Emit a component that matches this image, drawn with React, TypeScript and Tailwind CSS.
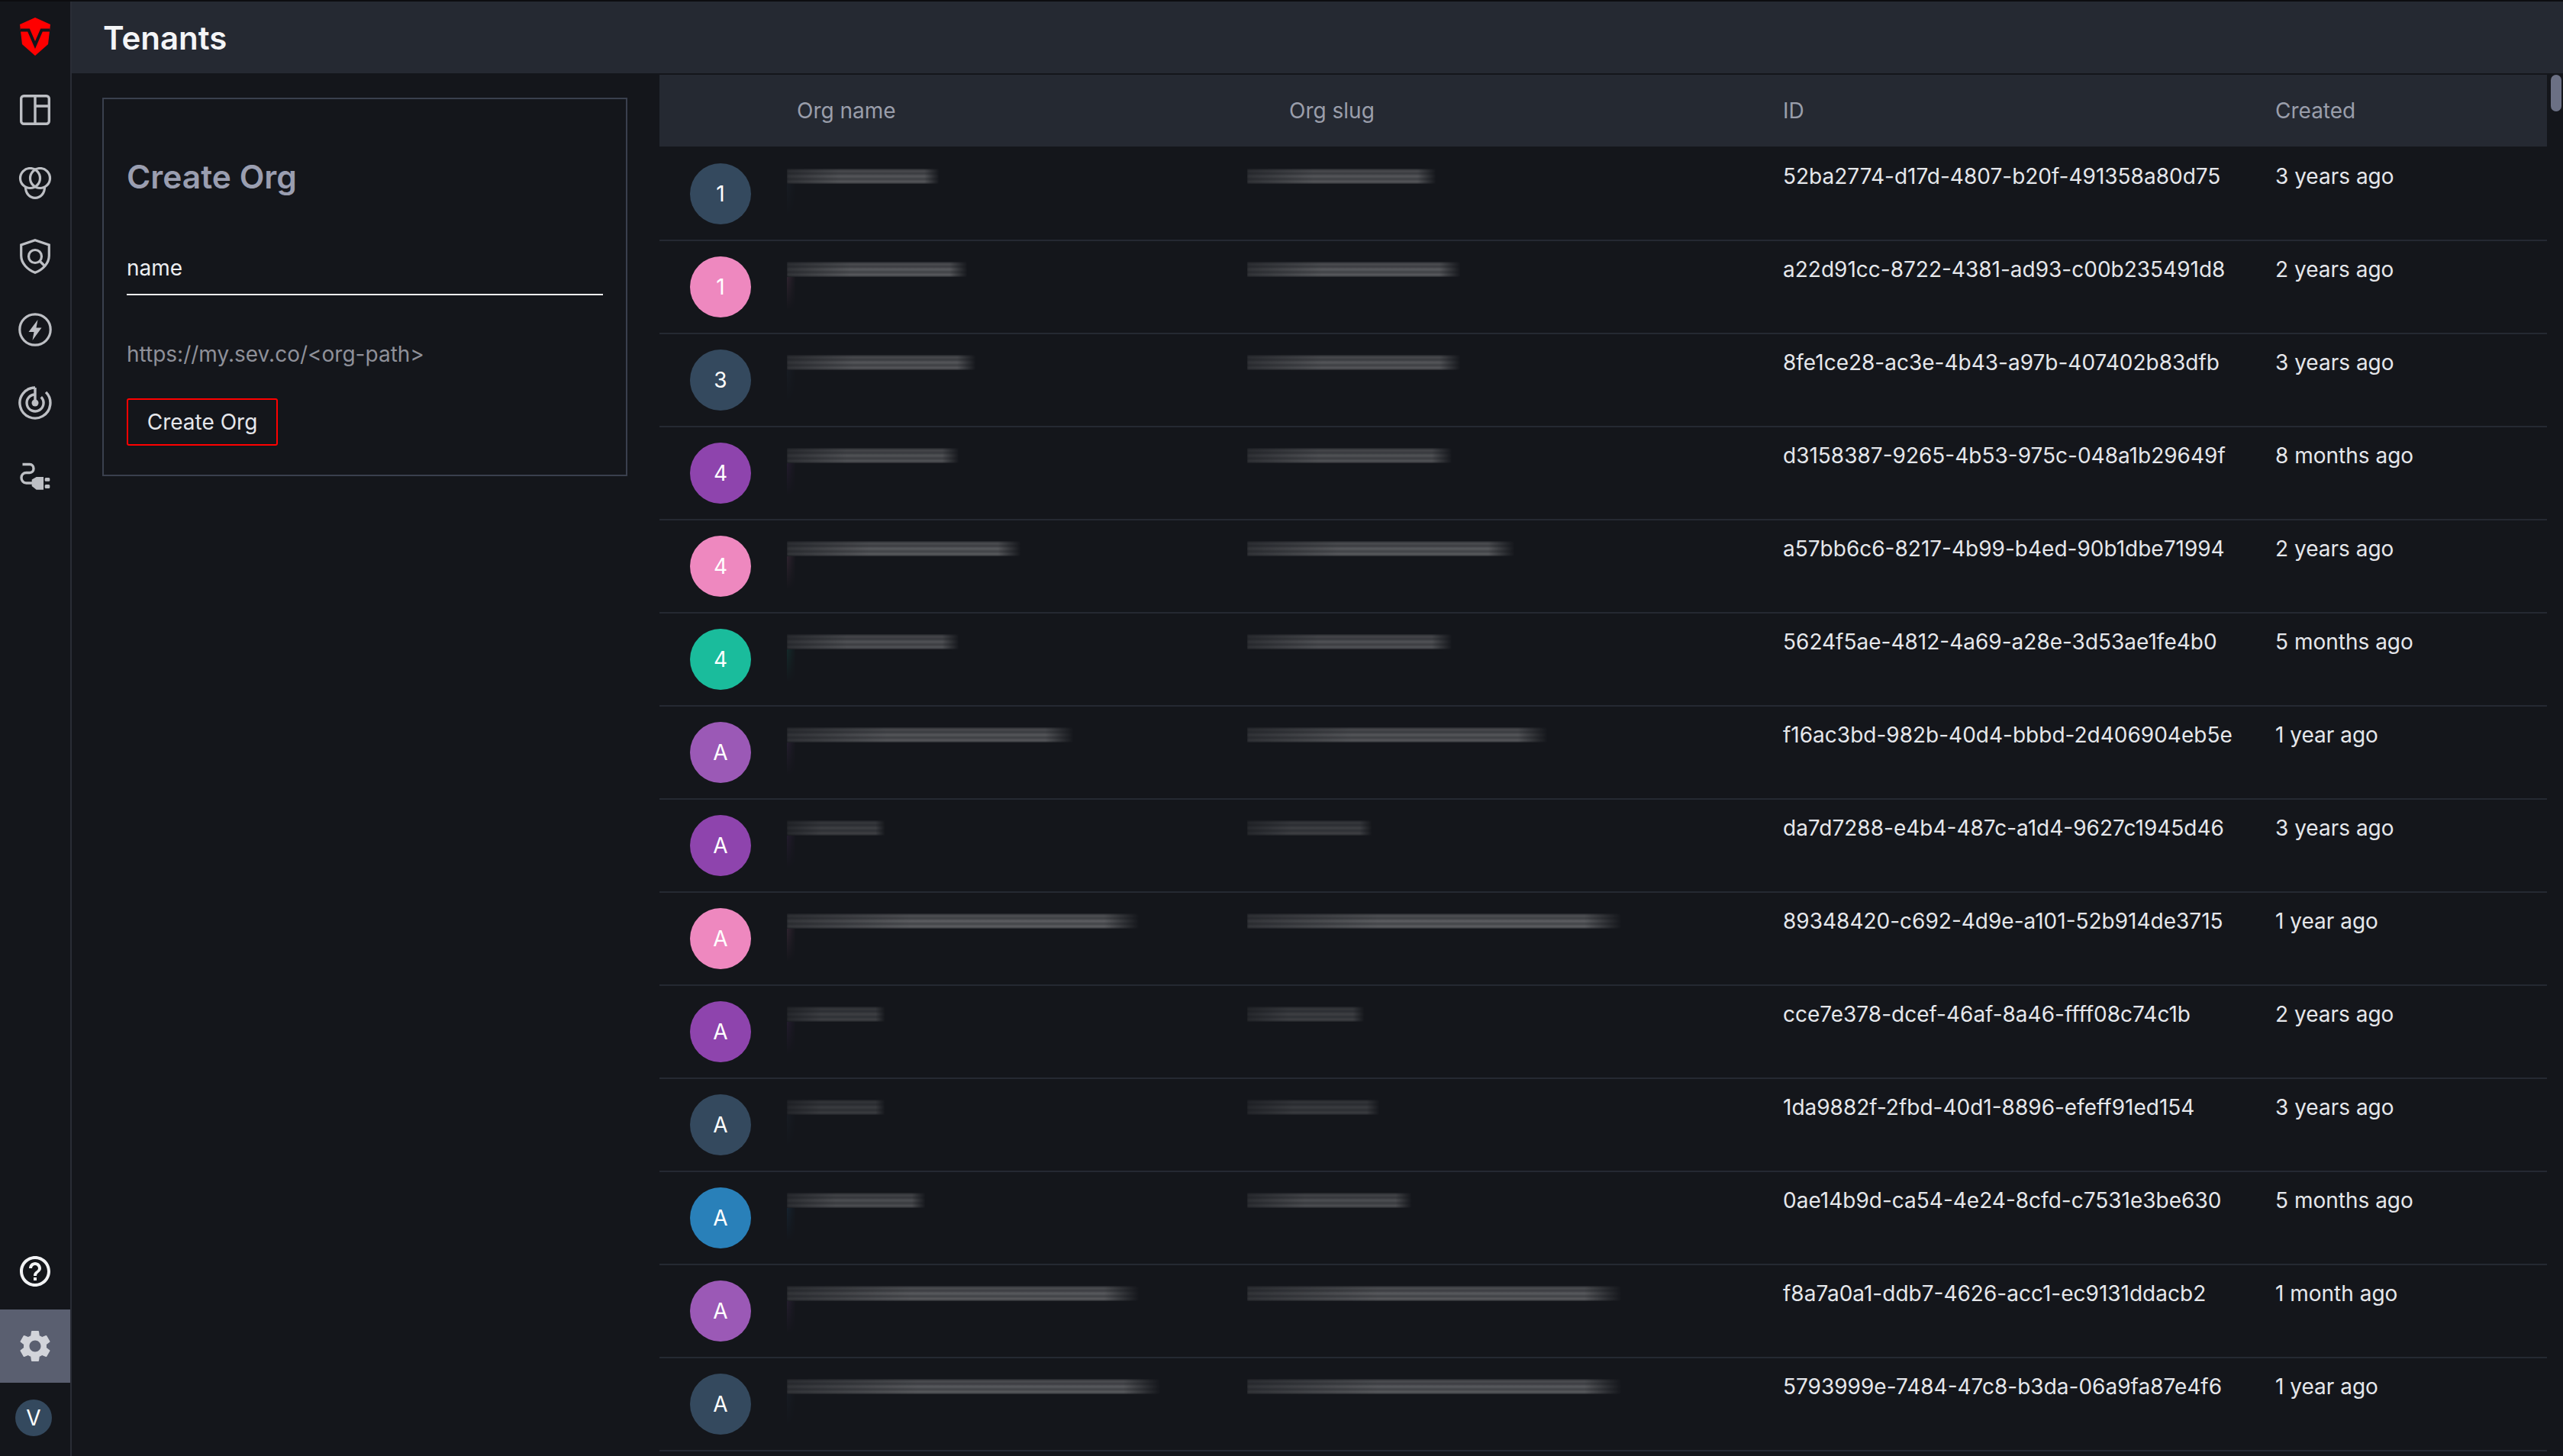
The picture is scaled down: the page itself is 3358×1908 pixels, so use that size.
import { MdHelpOutline, MdSettings } from "react-icons/md";

const SLATE = "#34495e";
const PINK = "#ee88bf";
const PURPLE = "#8e44ad";
const VIOLET = "#9b59b6";
const TEAL = "#1abc9c";
const BLUE = "#2980b9";

// nameW / slugW are the widths of the redacted smears, dim is their strength
const rows = [
  { letter: "1", color: SLATE, nameW: 200, slugW: 248, dim: 0.85, id: "52ba2774-d17d-4807-b20f-491358a80d75", created: "3 years ago" },
  { letter: "1", color: PINK, nameW: 237, slugW: 280, dim: 0.9, id: "a22d91cc-8722-4381-ad93-c00b235491d8", created: "2 years ago" },
  { letter: "3", color: SLATE, nameW: 248, slugW: 280, dim: 0.85, id: "8fe1ce28-ac3e-4b43-a97b-407402b83dfb", created: "3 years ago" },
  { letter: "4", color: PURPLE, nameW: 226, slugW: 269, dim: 0.8, id: "d3158387-9265-4b53-975c-048a1b29649f", created: "8 months ago" },
  { letter: "4", color: PINK, nameW: 307, slugW: 351, dim: 0.9, id: "a57bb6c6-8217-4b99-b4ed-90b1dbe71994", created: "2 years ago" },
  { letter: "4", color: TEAL, nameW: 226, slugW: 269, dim: 0.8, id: "5624f5ae-4812-4a69-a28e-3d53ae1fe4b0", created: "5 months ago" },
  { letter: "A", color: VIOLET, nameW: 376, slugW: 394, dim: 0.85, id: "f16ac3bd-982b-40d4-bbbd-2d406904eb5e", created: "1 year ago" },
  { letter: "A", color: PURPLE, nameW: 129, slugW: 164, dim: 0.55, id: "da7d7288-e4b4-487c-a1d4-9627c1945d46", created: "3 years ago" },
  { letter: "A", color: PINK, nameW: 462, slugW: 491, dim: 0.95, id: "89348420-c692-4d9e-a101-52b914de3715", created: "1 year ago" },
  { letter: "A", color: PURPLE, nameW: 129, slugW: 154, dim: 0.55, id: "cce7e378-dcef-46af-8a46-ffff08c74c1b", created: "2 years ago" },
  { letter: "A", color: SLATE, nameW: 129, slugW: 174, dim: 0.5, id: "1da9882f-2fbd-40d1-8896-efeff91ed154", created: "3 years ago" },
  { letter: "A", color: BLUE, nameW: 182, slugW: 216, dim: 0.75, id: "0ae14b9d-ca54-4e24-8cfd-c7531e3be630", created: "5 months ago" },
  { letter: "A", color: VIOLET, nameW: 462, slugW: 491, dim: 0.9, id: "f8a7a0a1-ddb7-4626-acc1-ec9131ddacb2", created: "1 month ago" },
  { letter: "A", color: SLATE, nameW: 490, slugW: 491, dim: 0.9, id: "5793999e-7484-47c8-b3da-06a9fa87e4f6", created: "1 year ago" },
];

function Logo() {
  return (
    <svg width="40" height="50" viewBox="0 0 40 50">
      <path d="M20 0 40 9 37 35 20 50 3 35 0 9Z" fill="#ff0000" />
      <path d="M1 16.5H11.5L20 36 28.500 16.500H39" fill="none" stroke="#14161b" strokeWidth="4" />
    </svg>
  );
}

function PanelIcon() {
  return (
    <svg width="40" height="40" viewBox="0 0 40 40" fill="none" stroke="#bdbfc4" strokeWidth="3.4">
      <rect x="1.700" y="1.700" width="36.600" height="36.600" rx="3.500" />
      <path d="M20 2V38M20 15H38" />
    </svg>
  );
}

function VennIcon() {
  return (
    <svg width="44" height="42" viewBox="0 0 44 42" fill="none" stroke="#bdbfc4" strokeWidth="3.200">
      <circle cx="15.500" cy="14.500" r="13" />
      <circle cx="28.500" cy="14.500" r="13" />
      <path d="M9.500 26.500C9.500 34.500 15 40.300 22 40.300S34.500 34.500 34.500 26.500" />
    </svg>
  );
}

function ShieldIcon() {
  return (
    <svg width="40" height="46" viewBox="0 0 40 46" fill="none" stroke="#bdbfc4" strokeWidth="3.200">
      <path d="M20 1.700 38.300 8V22C38.300 32 30 40.500 20 44.300 10 40.500 1.700 32 1.700 22V8Z" />
      <circle cx="20" cy="23" r="8.500" />
      <path d="M26 29 33 36" />
    </svg>
  );
}

function BoltIcon() {
  return (
    <svg width="44" height="44" viewBox="0 0 44 44">
      <circle cx="22" cy="22" r="20.200" fill="none" stroke="#bdbfc4" strokeWidth="3.200" />
      <path d="M25.500 9 13.500 25H20.500L18.500 36 30.500 19.500H23.500Z" fill="#bdbfc4" />
    </svg>
  );
}

function RadarIcon() {
  return (
    <svg width="44" height="44" viewBox="0 0 44 44" fill="none" stroke="#bdbfc4" strokeWidth="3.400">
      <path d="M22 2A20 20 0 1 0 36.100 7.900" />
      <path d="M22 11A11 11 0 1 0 29.800 14.200" />
      <path d="M22 2V22" />
      <circle cx="22" cy="22" r="4.500" fill="#bdbfc4" stroke="none" />
    </svg>
  );
}

function PlugIcon() {
  return (
    <svg width="40" height="36" viewBox="0 0 40 36">
      <path d="M3.500 2.500H13C16 2.500 18 4.800 18 8S16 13.500 13 13.500H8.500C4.500 13.500 2 16.500 2 20S4.500 27 8.500 27H16" fill="none" stroke="#bdbfc4" strokeWidth="3.400" />
      <path d="M15.700 22.500 21.700 19H31V35.700H21.700L15.700 31Z" fill="#bdbfc4" />
      <rect x="32.700" y="20" width="6.600" height="4.700" rx="1.500" fill="#bdbfc4" />
      <rect x="32.700" y="29" width="6.600" height="5" rx="1.500" fill="#bdbfc4" />
    </svg>
  );
}

function Sidebar() {
  return (
    <aside className="w-[94px] shrink-0 border-r-2 border-[#2a2d36] flex flex-col items-center">
      <div className="h-[94px] w-full flex items-center justify-center pb-[2px]">
        <Logo />
      </div>
      <div className="flex flex-col items-center w-full">
        <div className="h-[96px] flex items-center justify-center"><PanelIcon /></div>
        <div className="h-[96px] flex items-center justify-center"><VennIcon /></div>
        <div className="h-[96px] flex items-center justify-center"><ShieldIcon /></div>
        <div className="h-[96px] flex items-center justify-center"><BoltIcon /></div>
        <div className="h-[96px] flex items-center justify-center"><RadarIcon /></div>
        <div className="h-[96px] flex items-center justify-center"><PlugIcon /></div>
      </div>
      <div className="mt-auto w-full flex flex-col items-center">
        <div className="h-[96px] w-full flex items-center justify-center pb-[4px] text-[#f2f3f5]">
          <MdHelpOutline size={48} />
        </div>
        <div className="h-[96px] w-full flex items-center justify-center bg-[#5a5f70] text-[#d2d4da]">
          <MdSettings size={50} />
        </div>
        <div className="h-[96px] w-full flex items-center justify-center pr-[4px] pb-[4px]">
          <div className="w-[48px] h-[48px] rounded-full bg-[#34495e] flex items-center justify-center text-[28px] text-white">
            V
          </div>
        </div>
      </div>
    </aside>
  );
}

function CreateOrg() {
  return (
    <div className="w-[770px] shrink-0 pl-[40px] pt-[32px] pr-[42px]">
      <div className="h-[496px] border-2 border-[#3a404e] px-[30px] pt-[72px]">
        <h2 className="text-[42.500px] leading-[60px] font-semibold text-[#9a9eb0]">Create Org</h2>
        <div className="mt-[67px] h-[58px] border-b-2 border-[#f2f3f5] text-[28px] leading-[40px] text-[#eceef1] pt-[2px]">
          name
        </div>
        <div className="mt-[57px] text-[28px] leading-[40px] text-[#8e9099]">{"https://my.sev.co/<org-path>"}</div>
        <button className="mt-[38px] w-[198px] h-[62px] border-2 border-[#ff0000] rounded-[3px] text-[28px] text-[#e5e7eb] flex items-center justify-center">
          Create Org
        </button>
      </div>
    </div>
  );
}

function Smear({ width, dim, color }: { width: number; dim: number; color?: string }) {
  return (
    <div>
      <div
        className="h-[20px] blur-[1px] bg-[linear-gradient(to_bottom,rgba(255,255,255,0.06)_0%,rgba(255,255,255,0.3)_15%,rgba(255,255,255,0.16)_32%,rgba(255,255,255,0.36)_50%,rgba(255,255,255,0.18)_68%,rgba(255,255,255,0.38)_88%,rgba(255,255,255,0.05)_100%)] [mask-image:linear-gradient(to_right,rgba(0,0,0,0.45)_0%,black_35%,black_90%,transparent_100%)]"
        style={{ width, opacity: dim }}
      />
      {color && (
        <div
          className="w-[12px] h-[44px] opacity-[0.12] bg-[linear-gradient(to_right,currentColor,transparent)] [mask-image:linear-gradient(to_bottom,black,transparent)]"
          style={{ color }}
        />
      )}
    </div>
  );
}

function Table() {
  return (
    <div className="flex-1 min-w-0 mt-[2px]">
      <div className="h-[94px] mb-[2px] bg-[#252932] grid grid-cols-[180px_645px_647px_645px_1fr] items-center text-[28px] text-[#9a9eab]">
        <div />
        <div>Org name</div>
        <div>Org slug</div>
        <div>ID</div>
        <div>Created</div>
      </div>
      {rows.map((r) => (
        <div
          key={r.id}
          className="h-[122px] border-b-2 border-[#252932] grid grid-cols-[180px_645px_647px_645px_1fr] text-[28px] leading-[40px] text-[#e5e7eb]"
        >
          <div className="pl-[40px] pt-[20px]">
            <div
              className="w-[80px] h-[80px] rounded-full flex items-center justify-center text-white"
              style={{ backgroundColor: r.color }}
            >
              {r.letter}
            </div>
          </div>
          <div className="pt-[27px] ml-[-13px]">
            <Smear width={r.nameW} dim={r.dim} color={r.color} />
          </div>
          <div className="pt-[27px] ml-[-55px]">
            <Smear width={r.slugW} dim={r.dim} />
          </div>
          <div className="pt-[17px]">{r.id}</div>
          <div className="pt-[17px]">{r.created}</div>
        </div>
      ))}
    </div>
  );
}

export default function App() {
  return (
    <div className="w-[3358px] h-[1908px] overflow-hidden flex bg-[#14161b] font-['Inter',sans-serif] border-t-2 border-[#0c0d10]">
      <Sidebar />
      <div className="flex-1 min-w-0 flex flex-col">
        <header className="h-[94px] shrink-0 bg-[#252932] flex items-center pl-[41px] text-[42px] font-semibold text-[#f4f5f7]">
          Tenants
        </header>
        <div className="flex-1 min-h-0 flex">
          <CreateOrg />
          <Table />
          <div className="w-[21px] shrink-0 pl-[5px] pt-[2px]">
            <div className="w-[14px] h-[48px] rounded-full bg-[#6b7084]" />
          </div>
        </div>
      </div>
    </div>
  );
}
